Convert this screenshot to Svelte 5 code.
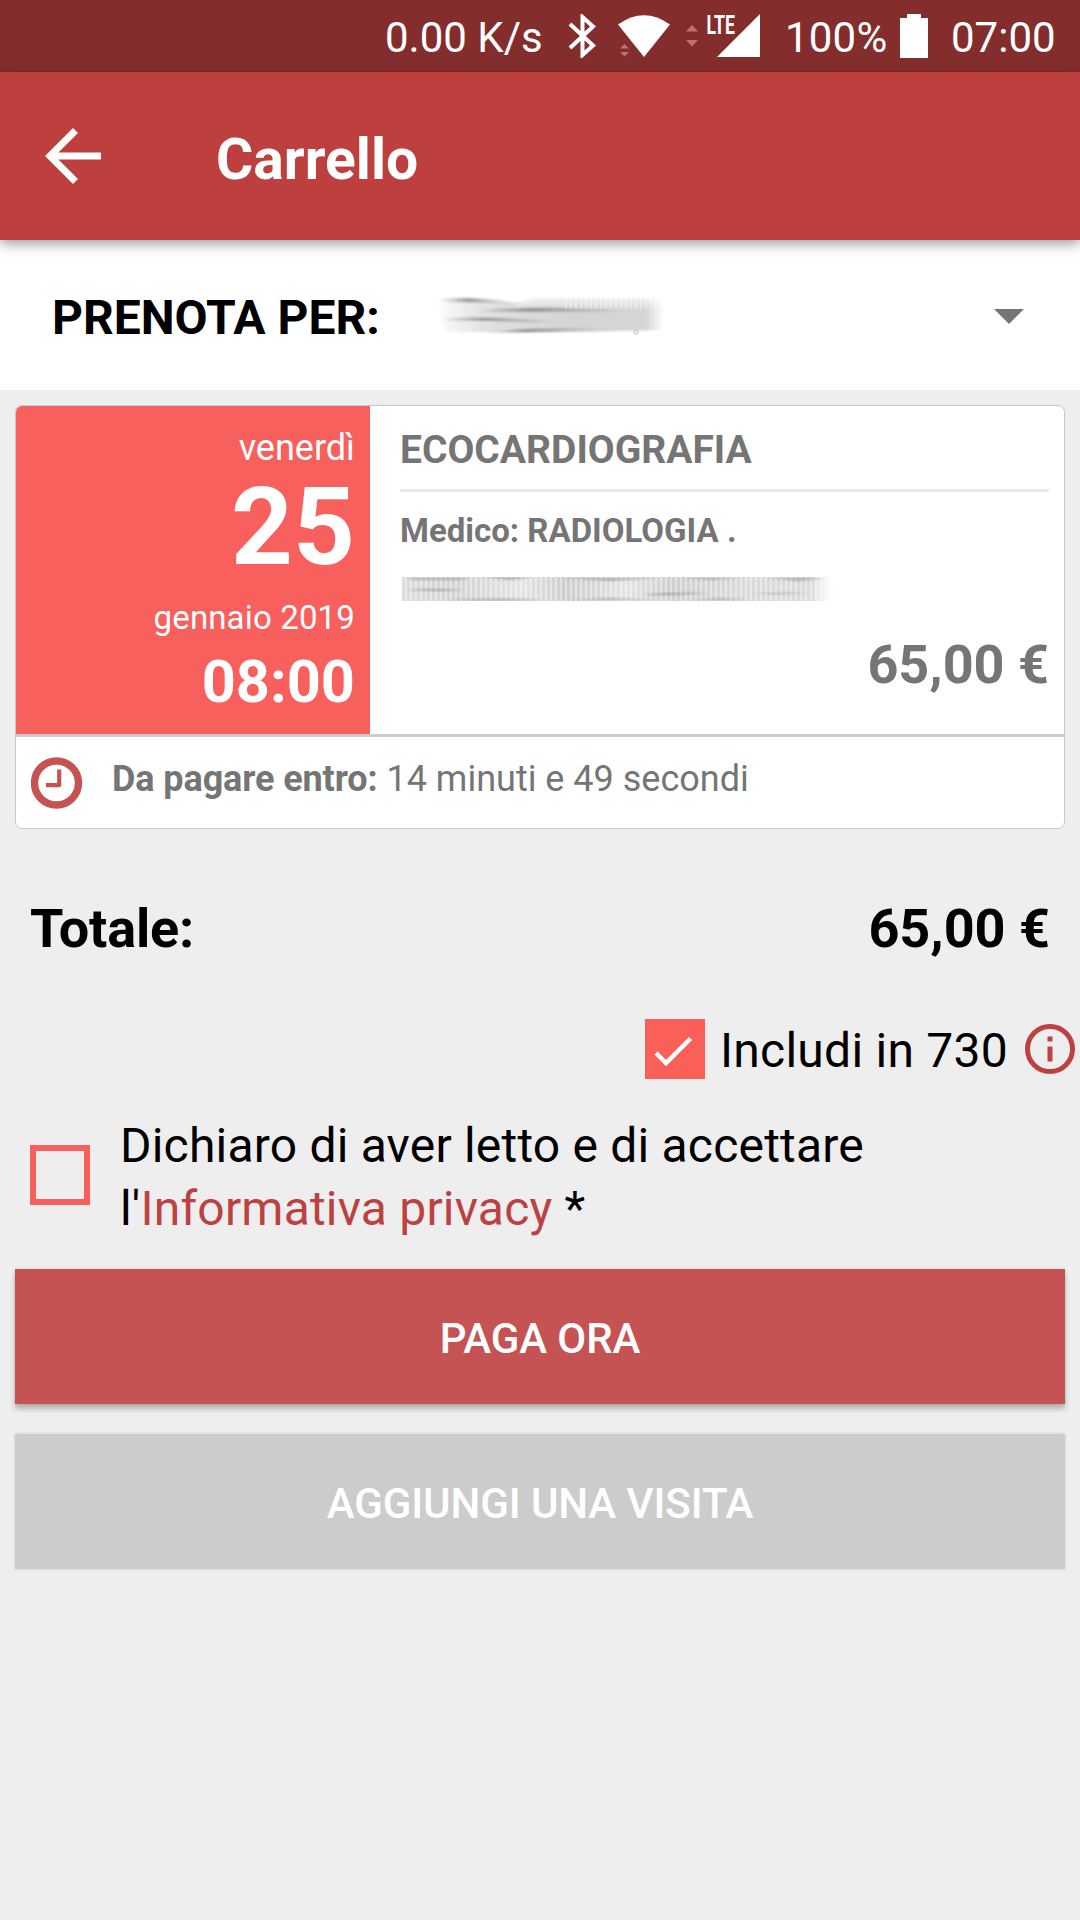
<script>
  let include730 = $state(true);
  let privacy = $state(false);
</script>

<div class="screen">
  <div class="status">
    <span class="speed">0.00 K/s</span>
    <svg class="bt" viewBox="0 0 28 44" width="28" height="44">
      <path d="M2 10 L25 31.500 L14.500 41 V3 L25 12.500 L2 34" fill="none" stroke="#fff" stroke-width="4" />
    </svg>
    <svg class="wifi" viewBox="0 0 54 44" width="54" height="44">
      <path d="M1 10.500 Q27 -8 53 10.500 L27 43 Z" fill="#fff" />
      <path d="M3 34.500 L7.500 30 L12 34.500 Z M3 38 H12 L7.500 42.500 Z" fill="#b87474" />
    </svg>
    <svg class="cell" viewBox="0 -14 75 58" width="75" height="58">
      <path d="M0 17.500 L6 11 L12 17.500 Z M0 26 H12 L6 32.500 Z" fill="#b87474" />
      <path d="M74 0 V43 H31 Z" fill="#fff" />
      <text x="20.500" y="19.500" class="lte" textLength="28.500" lengthAdjust="spacingAndGlyphs">LTE</text>
    </svg>
    <span class="pct">100%</span>
    <svg class="batt" viewBox="0 0 28 44" width="28" height="44">
      <path d="M7 0 H21 V4 H28 V44 H0 V4 H7 Z" fill="#fff" />
    </svg>
    <span class="time">07:00</span>
  </div>

  <header class="bar">
    <svg viewBox="0 0 56 56" width="56" height="56">
      <path d="M56 24.500 H13.400 L33 5 L28 0 L0 28 L28 56 L33 51 L13.400 31.500 H56 Z" fill="#fff" />
    </svg>
    <h1>Carrello</h1>
  </header>

  <div class="selector">
    <span class="label">PRENOTA PER:</span>
    <svg class="name" viewBox="0 0 236 40" width="236" height="40">
      <defs>
        <linearGradient id="nameFade">
          <stop offset="0" stop-color="#c8c8c8" stop-opacity="0" />
          <stop offset=".25" stop-color="#d8d8d8" stop-opacity=".8" />
          <stop offset=".6" stop-color="#d4d4d4" />
          <stop offset=".92" stop-color="#d6d6d6" />
          <stop offset="1" stop-color="#ddd" stop-opacity="0" />
        </linearGradient>
        <linearGradient id="streak">
          <stop offset="0" stop-color="#777" stop-opacity="0" />
          <stop offset=".35" stop-color="#777" stop-opacity=".7" />
          <stop offset="1" stop-color="#999" stop-opacity="0" />
        </linearGradient>
        <linearGradient id="topFade" x2="0" y2="1">
          <stop offset="0" stop-color="#fff" stop-opacity=".8" />
          <stop offset="1" stop-color="#fff" stop-opacity="0" />
        </linearGradient>
        <pattern id="ribs" width="5" height="40" patternUnits="userSpaceOnUse">
          <rect width="2" height="40" fill="#fff" opacity=".3" />
        </pattern>
        <filter id="soft" x="-5%" y="-20%" width="110%" height="140%"><feGaussianBlur stdDeviation="1.2" /></filter>
      </defs>
      <g filter="url(#soft)">
        <path d="M2 4 L80 8 L100 3 H224 Q236 20 224 35 L150 37 H10 Z" fill="url(#nameFade)" />
        <rect x="80" y="1" width="150" height="14" fill="url(#topFade)" />
        <path d="M5 3 Q50 2 88 8 L80 9 Q40 7 5 7 Z" fill="url(#streak)" />
        <path d="M40 15 Q110 10 200 15 L180 17 H50 Z" fill="url(#streak)" />
        <path d="M5 23 Q70 21 130 27 L100 28 Q50 25 5 26 Z" fill="url(#streak)" />
        <path d="M45 38 Q100 31 180 34 L120 37 Z" fill="url(#streak)" />
      </g>
      <rect x="130" y="2" width="95" height="12" fill="url(#ribs)" />
      <circle cx="201" cy="37" r="2" fill="none" stroke="#bbb" />
    </svg>
    <svg class="caret" viewBox="0 0 30 15" width="30" height="15"><path d="M0 0 H30 L15 15 Z" fill="#757575" /></svg>
  </div>

  <section class="card">
    <div class="visit">
      <div class="date">
        <span class="weekday">venerdì</span>
        <span class="day">25</span>
        <span class="month">gennaio 2019</span>
        <span class="hour">08:00</span>
      </div>
      <div class="info">
        <h2>ECOCARDIOGRAFIA</h2>
        <p class="doctor">Medico: RADIOLOGIA .</p>
        <svg class="place" viewBox="0 0 434 24" width="434" height="24">
          <defs>
            <linearGradient id="placeFade">
              <stop offset="0" stop-color="#dedede" />
              <stop offset=".12" stop-color="#d4d4d4" />
              <stop offset=".28" stop-color="#e4e4e4" />
              <stop offset=".38" stop-color="#cecece" />
              <stop offset=".52" stop-color="#e4e4e4" />
              <stop offset=".62" stop-color="#d0d0d0" />
              <stop offset=".78" stop-color="#dadada" />
              <stop offset=".95" stop-color="#dcdcdc" />
              <stop offset="1" stop-color="#eee" stop-opacity="0" />
            </linearGradient>
            <pattern id="lines" width="5" height="24" patternUnits="userSpaceOnUse">
              <rect width="2" height="24" fill="#fff" opacity=".4" />
            </pattern>
          </defs>
          <rect x="2" width="432" height="24" fill="url(#placeFade)" />
          <rect x="2" width="432" height="24" fill="url(#lines)" />
          <g filter="url(#soft)">
            <path d="M5 1 H70 L60 3 H15 Z M80 0 H135 L110 3 Z M160 1 H260 L210 4 Z M280 1 H345 L310 3 Z M365 1 H425 L400 4 Z" fill="#999" opacity=".7" />
            <path d="M5 13 Q30 11 65 13 L40 14 Z M240 18 Q270 15 310 16 L270 18 Z M355 17 Q380 15 410 16 L380 17 Z" fill="#888" opacity=".7" />
            <path d="M45 23 Q90 20 145 23 L100 24 Z M165 23 H260 L210 21 Z M290 23 H350 L320 21 Z" fill="#999" opacity=".7" />
          </g>
        </svg>
        <strong class="price">65,00 €</strong>
      </div>
    </div>
    <div class="deadline">
      <svg viewBox="0 0 52 52" width="52" height="52">
        <circle cx="25.500" cy="26" r="22" fill="none" stroke="#c65353" stroke-width="7.400" />
        <path d="M28.200 14.500 V28.200 H17" fill="none" stroke="#c65353" stroke-width="4.200" stroke-linecap="square" stroke-linejoin="round" />
      </svg>
      <p><b>Da pagare entro:</b> 14 minuti e 49 secondi</p>
    </div>
  </section>

  <div class="total"><span class="sum">Totale:</span><span>65,00 €</span></div>

  <div class="option">
    <button class="box" class:on={include730} aria-label="Includi in 730" onclick={() => (include730 = !include730)}>
      {#if include730}
        <svg viewBox="0 0 60 60" width="60" height="60"><path d="M11 34 L21 44 L45.500 19.500" fill="none" stroke="#fff" stroke-width="4.500" /></svg>
      {/if}
    </button>
    <span class="text">Includi in 730</span>
    <svg class="help" viewBox="0 0 50 50" width="50" height="50">
      <circle cx="25" cy="25" r="22.500" fill="none" stroke="#bc4141" stroke-width="5" />
      <path d="M22.500 12.500 h5 v5 h-5 Z M22.500 22.500 h5 v15 h-5 Z" fill="#bc4141" />
    </svg>
  </div>

  <div class="privacy">
    <button class="box" class:on={privacy} aria-label="Informativa privacy" onclick={() => (privacy = !privacy)}></button>
    <p>Dichiaro di aver letto e di accettare<br />l'<span>Informativa privacy</span> *</p>
  </div>

  <button class="action pay">PAGA ORA</button>
  <button class="action add">AGGIUNGI UNA VISITA</button>
</div>

<style>
  :global(body) { margin: 0; background: #eee; }
  .screen {
    width: 1080px;
    height: 1920px;
    overflow: hidden;
    background: #eee;
    font-family: Roboto, "Liberation Sans", sans-serif;
    color: #000;
  }
  .screen * { box-sizing: border-box; }
  svg { display: block; flex: none; }
  h1, h2, p { margin: 0; }
  span, p, h1, h2, strong { white-space: nowrap; }

  .status {
    height: 72px;
    padding-left: 385px;
    background: #842d2d;
    color: #fff;
    display: flex;
    font-size: 42px;
    line-height: 75px;
  }
  .status svg { margin-top: 14px; }
  .speed { width: 183px; }
  .bt { margin-right: 21px; }
  .wifi { margin-right: 15px; }
  .lte { font: 700 25px Roboto, sans-serif; fill: #fff; }
  .status .cell { margin: 0 24px 0 0; }
  .pct { width: 115px; letter-spacing: .2px; }
  .batt { margin-right: 23px; }

  .bar {
    position: relative;
    height: 168px;
    padding-left: 45px;
    display: flex;
    align-items: center;
    background: #bd403f;
    box-shadow: 0 4px 12px rgba(0, 0, 0, .38);
    color: #fff;
  }
  h1 { margin-left: 115px; padding-top: 8px; font-size: 57px; font-weight: 700; line-height: 66px; }

  .selector { height: 150px; padding: 0 56px 0 52px; display: flex; align-items: center; background: #fff; }
  .label { width: 383px; padding-top: 5px; font-size: 48px; font-weight: 700; line-height: 56px; }
  .caret { margin-left: auto; margin-top: 3px; }

  .card {
    margin: 15px 15px 0;
    height: 424px;
    border: 1px solid #c9c9c9;
    border-radius: 7px;
    background: #fff;
    overflow: hidden;
    color: #757575;
  }
  .visit { height: 331px; display: flex; border-bottom: 3px solid #ccc; }
  .date {
    width: 354px;
    padding: 21px 15px 0 0;
    display: flex;
    flex-direction: column;
    align-items: flex-end;
    background: #f7605d;
    color: #fff;
  }
  .weekday { font-size: 36px; line-height: 42px; }
  .day { margin-top: -2px; font-size: 108px; font-weight: 700; line-height: 120px; }
  .month { margin-top: 11px; font-size: 33px; line-height: 40px; letter-spacing: .15px; }
  .hour { margin-top: 14px; font-size: 59.5px; font-weight: 700; line-height: 60px; }
  .info { flex: 1; padding: 21px 15px 0 30px; display: flex; flex-direction: column; }
  h2 { height: 65px; border-bottom: 3px solid #e8e8e8; font-size: 39px; font-weight: 700; line-height: 46px; }
  .doctor { margin-top: 19px; font-size: 33px; font-weight: 700; line-height: 40px; }
  .place { margin-top: 26px; }
  .price { margin-top: 32px; text-align: right; font-size: 54px; line-height: 64px; }
  .deadline { height: 91px; padding-left: 15px; display: flex; align-items: center; gap: 29px; font-size: 36px; }
  .deadline p { line-height: 42px; padding-bottom: 8px; }
  .deadline b { letter-spacing: -.1px; }

  .total { margin-top: 68px; padding: 0 30px; display: flex; justify-content: space-between; font-size: 54px; font-weight: 700; line-height: 64px; }
  .sum { letter-spacing: -.15px; }

  .box { flex: none; width: 60px; height: 60px; padding: 0; border: 6px solid #f7605d; background: transparent; }
  .box.on { background: #fa5f5a; border: 0; }
  .option { margin-top: 58px; height: 60px; padding-right: 5px; display: flex; align-items: center; justify-content: flex-end; font-size: 48px; }
  .text { width: 305px; margin-left: 15px; padding-top: 3px; line-height: 56px; letter-spacing: .25px; }
  .privacy { margin-top: 35px; padding-left: 30px; display: flex; gap: 30px; font-size: 48px; line-height: 63px; letter-spacing: .2px; }
  .privacy .box { margin-top: 31px; }
  .privacy span { color: #bc4141; }

  .action {
    display: block;
    width: 1050px;
    height: 135px;
    margin: 29px 15px 0;
    padding: 4px 0 0;
    border: 0;
    color: #fff;
    font: 500 42px Roboto, sans-serif;
    letter-spacing: -.08px;
  }
  .pay { background: #c65353; box-shadow: 0 5px 5px rgba(0, 0, 0, .24), 0 0 3px rgba(0, 0, 0, .12); }
  .add { margin-top: 30px; background: #ccc; box-shadow: 0 0 3px rgba(0, 0, 0, .15); }
</style>
